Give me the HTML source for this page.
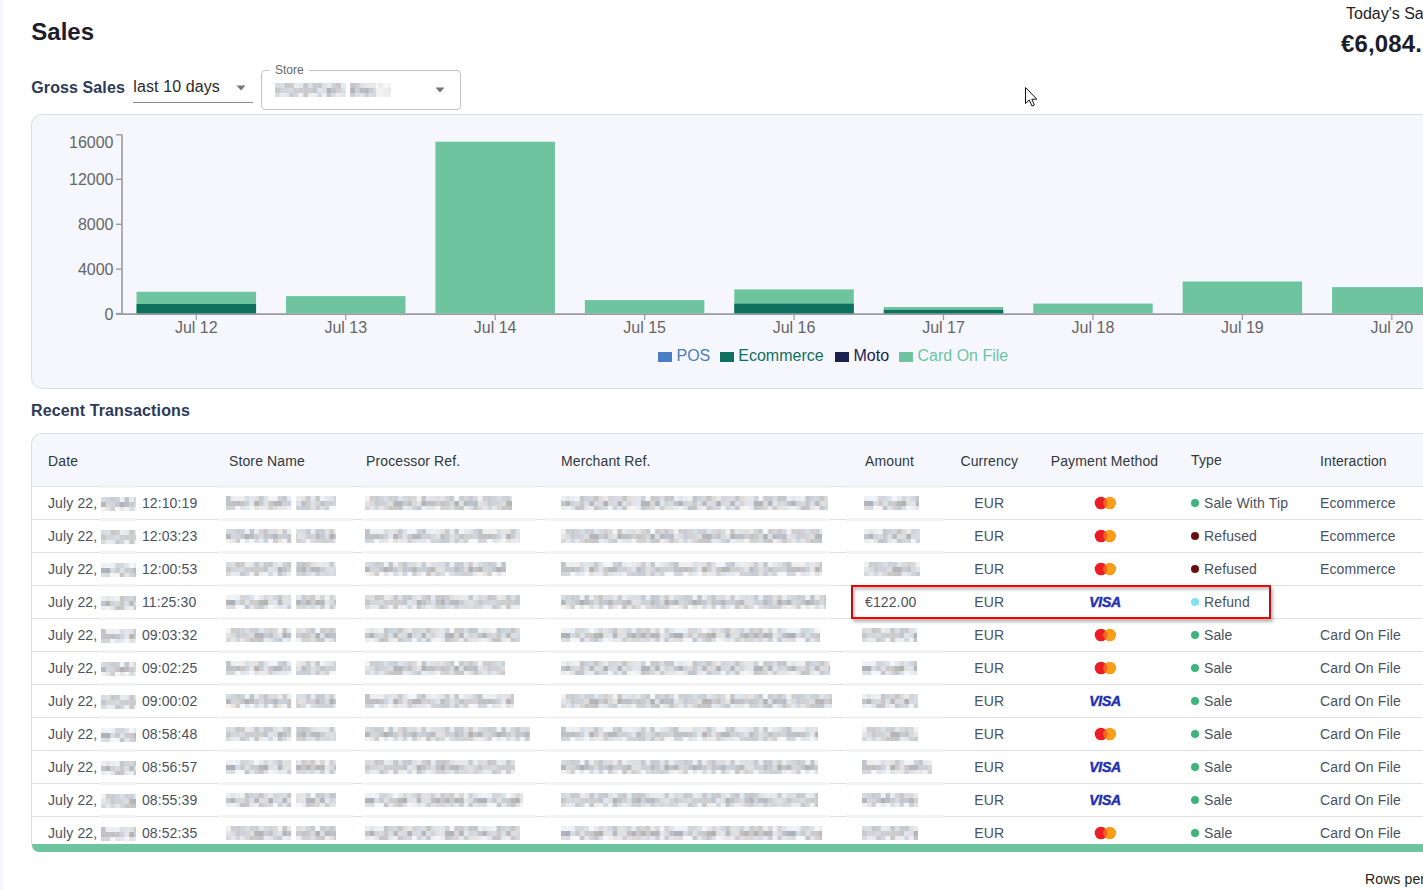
<!DOCTYPE html>
<html><head><meta charset="utf-8"><title>Sales</title>
<style>
html,body{margin:0;padding:0;}
body{width:1423px;height:890px;overflow:hidden;position:relative;background:#fff;font-family:"Liberation Sans",sans-serif;}
.t{position:absolute;white-space:nowrap;}
.s14{letter-spacing:0.12px;}
</style></head><body>
<div style="position:absolute;left:0px;top:0px;width:3px;height:890px;background:#f4f4fb;"></div>
<div class="t" style="left:31.30px;top:19.98px;font-size:24px;line-height:24px;color:#1b1d29;font-weight:700;">Sales</div>
<div class="t" style="left:1346.00px;top:5.95px;font-size:16px;line-height:16px;color:#222;font-weight:400;">Today's Sales</div>
<div class="t" style="left:1341.10px;top:31.98px;font-size:24px;line-height:24px;color:#1b1d29;font-weight:700;letter-spacing:0.12px;">&euro;6,084.</div>
<div class="t" style="left:31.30px;top:80.05px;font-size:16px;line-height:16px;color:#2c3a57;font-weight:700;letter-spacing:0.1px;">Gross Sales</div>
<div class="t" style="left:133.30px;top:79.15px;font-size:16px;line-height:16px;color:#2a2a2a;font-weight:400;letter-spacing:0.1px;">last 10 days</div>
<div style="position:absolute;left:133px;top:101.5px;width:120px;height:1px;background:#8a8a8a;"></div>
<svg style="position:absolute;left:235px;top:85px" width="12" height="6" viewBox="0 0 12 6"><path d="M1.5 0.5h9l-4.5 5z" fill="#757575"/></svg>
<div style="position:absolute;left:261px;top:70px;width:200px;height:39.5px;box-sizing:border-box;border:1px solid #c4c4c4;border-radius:4px;"></div>
<div style="position:absolute;left:269px;top:66px;width:40px;height:8px;background:#fff;"></div>
<div class="t" style="left:275.00px;top:64.24px;font-size:12px;line-height:12px;color:#666;font-weight:400;">Store</div>
<svg style="position:absolute;left:434px;top:87px" width="12" height="6" viewBox="0 0 12 6"><path d="M1.5 0.5h9l-4.5 5z" fill="#757575"/></svg>
<svg style="position:absolute;left:1024px;top:86px" width="16" height="22" viewBox="0 0 16 22"><path d="M1.5 1.5 L1.5 17.5 L5.3 14 L8 20 L10.4 19 L7.8 13.2 L12.8 13.2 Z" fill="#fff" stroke="#111" stroke-width="1" stroke-linejoin="round"/></svg>
<div style="position:absolute;left:31px;top:114px;width:1450px;height:275px;box-sizing:border-box;border:1px solid #dcdde0;border-radius:11px;background:#f5f7fc;"></div>
<svg style="position:absolute;left:0;top:0" width="1423" height="890"><line x1="122" y1="134.5" x2="122" y2="314" stroke="#9a9aa0" stroke-width="1.6"/><line x1="116" y1="314.1" x2="1423" y2="314.1" stroke="#9a9aa0" stroke-width="1.8"/><line x1="116" y1="134.8" x2="122" y2="134.8" stroke="#9a9aa0" stroke-width="1.4"/><line x1="116" y1="179.3" x2="122" y2="179.3" stroke="#9a9aa0" stroke-width="1.4"/><line x1="116" y1="224.3" x2="122" y2="224.3" stroke="#9a9aa0" stroke-width="1.4"/><line x1="116" y1="269.1" x2="122" y2="269.1" stroke="#9a9aa0" stroke-width="1.4"/><line x1="116" y1="313.6" x2="122" y2="313.6" stroke="#9a9aa0" stroke-width="1.4"/><rect x="136.55" y="291.8" width="119.5" height="21.60" fill="#6ec49f"/><rect x="136.55" y="304.0" width="119.5" height="9.40" fill="#10705f"/><line x1="196.30" y1="314" x2="196.30" y2="320" stroke="#9a9aa0" stroke-width="1.2"/><rect x="285.99" y="296.1" width="119.5" height="17.30" fill="#6ec49f"/><line x1="345.74" y1="314" x2="345.74" y2="320" stroke="#9a9aa0" stroke-width="1.2"/><rect x="435.43" y="141.7" width="119.5" height="171.70" fill="#6ec49f"/><line x1="495.18" y1="314" x2="495.18" y2="320" stroke="#9a9aa0" stroke-width="1.2"/><rect x="584.87" y="300.1" width="119.5" height="13.30" fill="#6ec49f"/><line x1="644.62" y1="314" x2="644.62" y2="320" stroke="#9a9aa0" stroke-width="1.2"/><rect x="734.31" y="289.4" width="119.5" height="24.00" fill="#6ec49f"/><rect x="734.31" y="303.7" width="119.5" height="9.70" fill="#10705f"/><line x1="794.06" y1="314" x2="794.06" y2="320" stroke="#9a9aa0" stroke-width="1.2"/><rect x="883.75" y="307.0" width="119.5" height="6.40" fill="#6ec49f"/><rect x="883.75" y="309.9" width="119.5" height="3.50" fill="#10705f"/><line x1="943.50" y1="314" x2="943.50" y2="320" stroke="#9a9aa0" stroke-width="1.2"/><rect x="1033.19" y="303.6" width="119.5" height="9.80" fill="#6ec49f"/><line x1="1092.94" y1="314" x2="1092.94" y2="320" stroke="#9a9aa0" stroke-width="1.2"/><rect x="1182.63" y="281.5" width="119.5" height="31.90" fill="#6ec49f"/><line x1="1242.38" y1="314" x2="1242.38" y2="320" stroke="#9a9aa0" stroke-width="1.2"/><rect x="1332.07" y="287.1" width="119.5" height="26.30" fill="#6ec49f"/><line x1="1391.82" y1="314" x2="1391.82" y2="320" stroke="#9a9aa0" stroke-width="1.2"/></svg>
<div class="t" style="left:-486.50px;width:600px;text-align:right;top:135.25px;font-size:16px;line-height:16px;color:#666;font-weight:400;">16000</div>
<div class="t" style="left:-486.50px;width:600px;text-align:right;top:172.35px;font-size:16px;line-height:16px;color:#666;font-weight:400;">12000</div>
<div class="t" style="left:-486.50px;width:600px;text-align:right;top:217.25px;font-size:16px;line-height:16px;color:#666;font-weight:400;">8000</div>
<div class="t" style="left:-486.50px;width:600px;text-align:right;top:262.25px;font-size:16px;line-height:16px;color:#666;font-weight:400;">4000</div>
<div class="t" style="left:-486.50px;width:600px;text-align:right;top:306.75px;font-size:16px;line-height:16px;color:#666;font-weight:400;">0</div>
<div class="t" style="left:-103.70px;width:600px;text-align:center;top:319.85px;font-size:16px;line-height:16px;color:#666;font-weight:400;">Jul 12</div>
<div class="t" style="left:45.74px;width:600px;text-align:center;top:319.85px;font-size:16px;line-height:16px;color:#666;font-weight:400;">Jul 13</div>
<div class="t" style="left:195.18px;width:600px;text-align:center;top:319.85px;font-size:16px;line-height:16px;color:#666;font-weight:400;">Jul 14</div>
<div class="t" style="left:344.62px;width:600px;text-align:center;top:319.85px;font-size:16px;line-height:16px;color:#666;font-weight:400;">Jul 15</div>
<div class="t" style="left:494.06px;width:600px;text-align:center;top:319.85px;font-size:16px;line-height:16px;color:#666;font-weight:400;">Jul 16</div>
<div class="t" style="left:643.50px;width:600px;text-align:center;top:319.85px;font-size:16px;line-height:16px;color:#666;font-weight:400;">Jul 17</div>
<div class="t" style="left:792.94px;width:600px;text-align:center;top:319.85px;font-size:16px;line-height:16px;color:#666;font-weight:400;">Jul 18</div>
<div class="t" style="left:942.38px;width:600px;text-align:center;top:319.85px;font-size:16px;line-height:16px;color:#666;font-weight:400;">Jul 19</div>
<div class="t" style="left:1091.82px;width:600px;text-align:center;top:319.85px;font-size:16px;line-height:16px;color:#666;font-weight:400;">Jul 20</div>
<div style="position:absolute;left:658px;top:351.5px;width:14px;height:10.5px;background:#4a7ec2;"></div>
<div class="t" style="left:676.50px;top:347.75px;font-size:16px;line-height:16px;color:#4a7ec2;font-weight:400;">POS</div>
<div style="position:absolute;left:719.8px;top:351.5px;width:14px;height:10.5px;background:#10705f;"></div>
<div class="t" style="left:738.30px;top:347.75px;font-size:16px;line-height:16px;color:#10705f;font-weight:400;">Ecommerce</div>
<div style="position:absolute;left:835px;top:351.5px;width:14px;height:10.5px;background:#1a2350;"></div>
<div class="t" style="left:853.50px;top:347.75px;font-size:16px;line-height:16px;color:#1a2350;font-weight:400;">Moto</div>
<div style="position:absolute;left:899px;top:351.5px;width:14px;height:10.5px;background:#6ec49f;"></div>
<div class="t" style="left:917.50px;top:347.75px;font-size:16px;line-height:16px;color:#6ec49f;font-weight:400;">Card On File</div>
<div class="t" style="left:31.00px;top:402.55px;font-size:16px;line-height:16px;color:#2c3a57;font-weight:700;letter-spacing:0.13px;">Recent Transactions</div>
<div style="position:absolute;left:31px;top:433px;width:1450px;height:412px;box-sizing:border-box;border:1px solid #dcdde0;border-bottom:none;border-radius:11px 11px 0 0;background:#fff;overflow:hidden;"></div>
<div style="position:absolute;left:32px;top:434px;width:1400px;height:52px;background:#f5f7fc;border-top-left-radius:10px;"></div>
<div style="position:absolute;left:32px;top:486px;width:1400px;height:1px;background:#e0e0e0;"></div>
<div style="position:absolute;left:32px;top:519px;width:1400px;height:1px;background:#e0e0e0;"></div>
<div style="position:absolute;left:32px;top:552px;width:1400px;height:1px;background:#e0e0e0;"></div>
<div style="position:absolute;left:32px;top:585px;width:1400px;height:1px;background:#e0e0e0;"></div>
<div style="position:absolute;left:32px;top:618px;width:1400px;height:1px;background:#e0e0e0;"></div>
<div style="position:absolute;left:32px;top:651px;width:1400px;height:1px;background:#e0e0e0;"></div>
<div style="position:absolute;left:32px;top:684px;width:1400px;height:1px;background:#e0e0e0;"></div>
<div style="position:absolute;left:32px;top:717px;width:1400px;height:1px;background:#e0e0e0;"></div>
<div style="position:absolute;left:32px;top:750px;width:1400px;height:1px;background:#e0e0e0;"></div>
<div style="position:absolute;left:32px;top:783px;width:1400px;height:1px;background:#e0e0e0;"></div>
<div style="position:absolute;left:32px;top:816px;width:1400px;height:1px;background:#e0e0e0;"></div>
<div style="position:absolute;left:100px;top:485px;width:36px;height:3px;background:#f3f3f4;"></div>
<div style="position:absolute;left:218px;top:485px;width:135px;height:3px;background:#f3f3f4;"></div>
<div style="position:absolute;left:362px;top:485px;width:174px;height:3px;background:#f3f3f4;"></div>
<div style="position:absolute;left:545px;top:485px;width:285px;height:3px;background:#f3f3f4;"></div>
<div style="position:absolute;left:846px;top:485px;width:98px;height:3px;background:#f3f3f4;"></div>
<div style="position:absolute;left:100px;top:518px;width:36px;height:3px;background:#f3f3f4;"></div>
<div style="position:absolute;left:218px;top:518px;width:135px;height:3px;background:#f3f3f4;"></div>
<div style="position:absolute;left:362px;top:518px;width:174px;height:3px;background:#f3f3f4;"></div>
<div style="position:absolute;left:545px;top:518px;width:285px;height:3px;background:#f3f3f4;"></div>
<div style="position:absolute;left:846px;top:518px;width:98px;height:3px;background:#f3f3f4;"></div>
<div style="position:absolute;left:100px;top:551px;width:36px;height:3px;background:#f3f3f4;"></div>
<div style="position:absolute;left:218px;top:551px;width:135px;height:3px;background:#f3f3f4;"></div>
<div style="position:absolute;left:362px;top:551px;width:174px;height:3px;background:#f3f3f4;"></div>
<div style="position:absolute;left:545px;top:551px;width:285px;height:3px;background:#f3f3f4;"></div>
<div style="position:absolute;left:846px;top:551px;width:98px;height:3px;background:#f3f3f4;"></div>
<div style="position:absolute;left:100px;top:584px;width:36px;height:3px;background:#f3f3f4;"></div>
<div style="position:absolute;left:218px;top:584px;width:135px;height:3px;background:#f3f3f4;"></div>
<div style="position:absolute;left:362px;top:584px;width:174px;height:3px;background:#f3f3f4;"></div>
<div style="position:absolute;left:545px;top:584px;width:285px;height:3px;background:#f3f3f4;"></div>
<div style="position:absolute;left:100px;top:617px;width:36px;height:3px;background:#f3f3f4;"></div>
<div style="position:absolute;left:218px;top:617px;width:135px;height:3px;background:#f3f3f4;"></div>
<div style="position:absolute;left:362px;top:617px;width:174px;height:3px;background:#f3f3f4;"></div>
<div style="position:absolute;left:545px;top:617px;width:285px;height:3px;background:#f3f3f4;"></div>
<div style="position:absolute;left:100px;top:650px;width:36px;height:3px;background:#f3f3f4;"></div>
<div style="position:absolute;left:218px;top:650px;width:135px;height:3px;background:#f3f3f4;"></div>
<div style="position:absolute;left:362px;top:650px;width:174px;height:3px;background:#f3f3f4;"></div>
<div style="position:absolute;left:545px;top:650px;width:285px;height:3px;background:#f3f3f4;"></div>
<div style="position:absolute;left:846px;top:650px;width:98px;height:3px;background:#f3f3f4;"></div>
<div style="position:absolute;left:100px;top:683px;width:36px;height:3px;background:#f3f3f4;"></div>
<div style="position:absolute;left:218px;top:683px;width:135px;height:3px;background:#f3f3f4;"></div>
<div style="position:absolute;left:362px;top:683px;width:174px;height:3px;background:#f3f3f4;"></div>
<div style="position:absolute;left:545px;top:683px;width:285px;height:3px;background:#f3f3f4;"></div>
<div style="position:absolute;left:846px;top:683px;width:98px;height:3px;background:#f3f3f4;"></div>
<div style="position:absolute;left:100px;top:716px;width:36px;height:3px;background:#f3f3f4;"></div>
<div style="position:absolute;left:218px;top:716px;width:135px;height:3px;background:#f3f3f4;"></div>
<div style="position:absolute;left:362px;top:716px;width:174px;height:3px;background:#f3f3f4;"></div>
<div style="position:absolute;left:545px;top:716px;width:285px;height:3px;background:#f3f3f4;"></div>
<div style="position:absolute;left:846px;top:716px;width:98px;height:3px;background:#f3f3f4;"></div>
<div style="position:absolute;left:100px;top:749px;width:36px;height:3px;background:#f3f3f4;"></div>
<div style="position:absolute;left:218px;top:749px;width:135px;height:3px;background:#f3f3f4;"></div>
<div style="position:absolute;left:362px;top:749px;width:174px;height:3px;background:#f3f3f4;"></div>
<div style="position:absolute;left:545px;top:749px;width:285px;height:3px;background:#f3f3f4;"></div>
<div style="position:absolute;left:846px;top:749px;width:98px;height:3px;background:#f3f3f4;"></div>
<div style="position:absolute;left:100px;top:782px;width:36px;height:3px;background:#f3f3f4;"></div>
<div style="position:absolute;left:218px;top:782px;width:135px;height:3px;background:#f3f3f4;"></div>
<div style="position:absolute;left:362px;top:782px;width:174px;height:3px;background:#f3f3f4;"></div>
<div style="position:absolute;left:545px;top:782px;width:285px;height:3px;background:#f3f3f4;"></div>
<div style="position:absolute;left:846px;top:782px;width:98px;height:3px;background:#f3f3f4;"></div>
<div style="position:absolute;left:100px;top:815px;width:36px;height:3px;background:#f3f3f4;"></div>
<div style="position:absolute;left:218px;top:815px;width:135px;height:3px;background:#f3f3f4;"></div>
<div style="position:absolute;left:362px;top:815px;width:174px;height:3px;background:#f3f3f4;"></div>
<div style="position:absolute;left:545px;top:815px;width:285px;height:3px;background:#f3f3f4;"></div>
<div style="position:absolute;left:846px;top:815px;width:98px;height:3px;background:#f3f3f4;"></div>
<div class="t s14" style="left:48.00px;top:453.95px;font-size:14px;line-height:14px;color:#32373f;font-weight:400;">Date</div>
<div class="t s14" style="left:229.00px;top:453.95px;font-size:14px;line-height:14px;color:#32373f;font-weight:400;">Store Name</div>
<div class="t s14" style="left:366.00px;top:453.95px;font-size:14px;line-height:14px;color:#32373f;font-weight:400;">Processor Ref.</div>
<div class="t s14" style="left:561.00px;top:453.95px;font-size:14px;line-height:14px;color:#32373f;font-weight:400;">Merchant Ref.</div>
<div class="t s14" style="left:865.00px;top:453.95px;font-size:14px;line-height:14px;color:#32373f;font-weight:400;">Amount</div>
<div class="t s14" style="left:689.30px;width:600px;text-align:center;top:453.95px;font-size:14px;line-height:14px;color:#32373f;font-weight:400;">Currency</div>
<div class="t s14" style="left:804.50px;width:600px;text-align:center;top:453.95px;font-size:14px;line-height:14px;color:#32373f;font-weight:400;">Payment Method</div>
<div class="t s14" style="left:1191.00px;top:453.45px;font-size:14px;line-height:14px;color:#32373f;font-weight:400;">Type</div>
<div class="t s14" style="left:1320.00px;top:453.95px;font-size:14px;line-height:14px;color:#32373f;font-weight:400;">Interaction</div>
<div class="t s14" style="left:48.00px;top:495.85px;font-size:14px;line-height:14px;color:#4b525e;font-weight:400;">July 22,</div>
<div class="t s14" style="left:141.90px;top:495.85px;font-size:14px;line-height:14px;color:#4b525e;font-weight:400;">12:10:19</div>
<div class="t s14" style="left:689.30px;width:600px;text-align:center;top:495.85px;font-size:14px;line-height:14px;color:#4b525e;font-weight:400;">EUR</div>
<svg style="position:absolute;left:1093px;top:496px" width="24" height="14" viewBox="0 0 24 14"><circle cx="8" cy="7" r="6.3" fill="#eb1c24"/><circle cx="16.8" cy="7" r="6.3" fill="#f89e1b"/><path d="M12.4 2.4 A6.3 6.3 0 0 1 12.4 11.6 A6.3 6.3 0 0 1 12.4 2.4Z" fill="#f4641f"/></svg>
<div style="position:absolute;left:1191px;top:499px;width:8px;height:8px;background:#3cb57a;border-radius:50%;"></div>
<div class="t s14" style="left:1204.00px;top:495.85px;font-size:14px;line-height:14px;color:#4b525e;font-weight:400;">Sale With Tip</div>
<div class="t s14" style="left:1320.00px;top:495.85px;font-size:14px;line-height:14px;color:#4b525e;font-weight:400;">Ecommerce</div>
<div class="t s14" style="left:48.00px;top:528.85px;font-size:14px;line-height:14px;color:#4b525e;font-weight:400;">July 22,</div>
<div class="t s14" style="left:141.90px;top:528.85px;font-size:14px;line-height:14px;color:#4b525e;font-weight:400;">12:03:23</div>
<div class="t s14" style="left:689.30px;width:600px;text-align:center;top:528.85px;font-size:14px;line-height:14px;color:#4b525e;font-weight:400;">EUR</div>
<svg style="position:absolute;left:1093px;top:529px" width="24" height="14" viewBox="0 0 24 14"><circle cx="8" cy="7" r="6.3" fill="#eb1c24"/><circle cx="16.8" cy="7" r="6.3" fill="#f89e1b"/><path d="M12.4 2.4 A6.3 6.3 0 0 1 12.4 11.6 A6.3 6.3 0 0 1 12.4 2.4Z" fill="#f4641f"/></svg>
<div style="position:absolute;left:1191px;top:532px;width:8px;height:8px;background:#6b0d0d;border-radius:50%;"></div>
<div class="t s14" style="left:1204.00px;top:528.85px;font-size:14px;line-height:14px;color:#4b525e;font-weight:400;">Refused</div>
<div class="t s14" style="left:1320.00px;top:528.85px;font-size:14px;line-height:14px;color:#4b525e;font-weight:400;">Ecommerce</div>
<div class="t s14" style="left:48.00px;top:561.85px;font-size:14px;line-height:14px;color:#4b525e;font-weight:400;">July 22,</div>
<div class="t s14" style="left:141.90px;top:561.85px;font-size:14px;line-height:14px;color:#4b525e;font-weight:400;">12:00:53</div>
<div class="t s14" style="left:689.30px;width:600px;text-align:center;top:561.85px;font-size:14px;line-height:14px;color:#4b525e;font-weight:400;">EUR</div>
<svg style="position:absolute;left:1093px;top:562px" width="24" height="14" viewBox="0 0 24 14"><circle cx="8" cy="7" r="6.3" fill="#eb1c24"/><circle cx="16.8" cy="7" r="6.3" fill="#f89e1b"/><path d="M12.4 2.4 A6.3 6.3 0 0 1 12.4 11.6 A6.3 6.3 0 0 1 12.4 2.4Z" fill="#f4641f"/></svg>
<div style="position:absolute;left:1191px;top:565px;width:8px;height:8px;background:#6b0d0d;border-radius:50%;"></div>
<div class="t s14" style="left:1204.00px;top:561.85px;font-size:14px;line-height:14px;color:#4b525e;font-weight:400;">Refused</div>
<div class="t s14" style="left:1320.00px;top:561.85px;font-size:14px;line-height:14px;color:#4b525e;font-weight:400;">Ecommerce</div>
<div class="t s14" style="left:48.00px;top:594.85px;font-size:14px;line-height:14px;color:#4b525e;font-weight:400;">July 22,</div>
<div class="t s14" style="left:141.90px;top:594.85px;font-size:14px;line-height:14px;color:#4b525e;font-weight:400;">11:25:30</div>
<div class="t s14" style="left:865.00px;top:594.85px;font-size:14px;line-height:14px;color:#4b525e;font-weight:400;">&euro;122.00</div>
<div class="t s14" style="left:689.30px;width:600px;text-align:center;top:594.85px;font-size:14px;line-height:14px;color:#4b525e;font-weight:400;">EUR</div>
<div class="t s14" style="left:805.00px;width:600px;text-align:center;top:595.35px;font-size:14px;line-height:14px;color:#1f30b4;font-weight:700;font-style:italic;letter-spacing:-0.3px;-webkit-text-stroke:0.45px #1f30b4;">VISA</div>
<div style="position:absolute;left:1191px;top:598px;width:8px;height:8px;background:#7fe3ee;border-radius:50%;"></div>
<div class="t s14" style="left:1204.00px;top:594.85px;font-size:14px;line-height:14px;color:#4b525e;font-weight:400;">Refund</div>
<div class="t s14" style="left:48.00px;top:627.85px;font-size:14px;line-height:14px;color:#4b525e;font-weight:400;">July 22,</div>
<div class="t s14" style="left:141.90px;top:627.85px;font-size:14px;line-height:14px;color:#4b525e;font-weight:400;">09:03:32</div>
<div class="t s14" style="left:689.30px;width:600px;text-align:center;top:627.85px;font-size:14px;line-height:14px;color:#4b525e;font-weight:400;">EUR</div>
<svg style="position:absolute;left:1093px;top:628px" width="24" height="14" viewBox="0 0 24 14"><circle cx="8" cy="7" r="6.3" fill="#eb1c24"/><circle cx="16.8" cy="7" r="6.3" fill="#f89e1b"/><path d="M12.4 2.4 A6.3 6.3 0 0 1 12.4 11.6 A6.3 6.3 0 0 1 12.4 2.4Z" fill="#f4641f"/></svg>
<div style="position:absolute;left:1191px;top:631px;width:8px;height:8px;background:#3cb57a;border-radius:50%;"></div>
<div class="t s14" style="left:1204.00px;top:627.85px;font-size:14px;line-height:14px;color:#4b525e;font-weight:400;">Sale</div>
<div class="t s14" style="left:1320.00px;top:627.85px;font-size:14px;line-height:14px;color:#4b525e;font-weight:400;">Card On File</div>
<div class="t s14" style="left:48.00px;top:660.85px;font-size:14px;line-height:14px;color:#4b525e;font-weight:400;">July 22,</div>
<div class="t s14" style="left:141.90px;top:660.85px;font-size:14px;line-height:14px;color:#4b525e;font-weight:400;">09:02:25</div>
<div class="t s14" style="left:689.30px;width:600px;text-align:center;top:660.85px;font-size:14px;line-height:14px;color:#4b525e;font-weight:400;">EUR</div>
<svg style="position:absolute;left:1093px;top:661px" width="24" height="14" viewBox="0 0 24 14"><circle cx="8" cy="7" r="6.3" fill="#eb1c24"/><circle cx="16.8" cy="7" r="6.3" fill="#f89e1b"/><path d="M12.4 2.4 A6.3 6.3 0 0 1 12.4 11.6 A6.3 6.3 0 0 1 12.4 2.4Z" fill="#f4641f"/></svg>
<div style="position:absolute;left:1191px;top:664px;width:8px;height:8px;background:#3cb57a;border-radius:50%;"></div>
<div class="t s14" style="left:1204.00px;top:660.85px;font-size:14px;line-height:14px;color:#4b525e;font-weight:400;">Sale</div>
<div class="t s14" style="left:1320.00px;top:660.85px;font-size:14px;line-height:14px;color:#4b525e;font-weight:400;">Card On File</div>
<div class="t s14" style="left:48.00px;top:693.85px;font-size:14px;line-height:14px;color:#4b525e;font-weight:400;">July 22,</div>
<div class="t s14" style="left:141.90px;top:693.85px;font-size:14px;line-height:14px;color:#4b525e;font-weight:400;">09:00:02</div>
<div class="t s14" style="left:689.30px;width:600px;text-align:center;top:693.85px;font-size:14px;line-height:14px;color:#4b525e;font-weight:400;">EUR</div>
<div class="t s14" style="left:805.00px;width:600px;text-align:center;top:694.35px;font-size:14px;line-height:14px;color:#1f30b4;font-weight:700;font-style:italic;letter-spacing:-0.3px;-webkit-text-stroke:0.45px #1f30b4;">VISA</div>
<div style="position:absolute;left:1191px;top:697px;width:8px;height:8px;background:#3cb57a;border-radius:50%;"></div>
<div class="t s14" style="left:1204.00px;top:693.85px;font-size:14px;line-height:14px;color:#4b525e;font-weight:400;">Sale</div>
<div class="t s14" style="left:1320.00px;top:693.85px;font-size:14px;line-height:14px;color:#4b525e;font-weight:400;">Card On File</div>
<div class="t s14" style="left:48.00px;top:726.85px;font-size:14px;line-height:14px;color:#4b525e;font-weight:400;">July 22,</div>
<div class="t s14" style="left:141.90px;top:726.85px;font-size:14px;line-height:14px;color:#4b525e;font-weight:400;">08:58:48</div>
<div class="t s14" style="left:689.30px;width:600px;text-align:center;top:726.85px;font-size:14px;line-height:14px;color:#4b525e;font-weight:400;">EUR</div>
<svg style="position:absolute;left:1093px;top:727px" width="24" height="14" viewBox="0 0 24 14"><circle cx="8" cy="7" r="6.3" fill="#eb1c24"/><circle cx="16.8" cy="7" r="6.3" fill="#f89e1b"/><path d="M12.4 2.4 A6.3 6.3 0 0 1 12.4 11.6 A6.3 6.3 0 0 1 12.4 2.4Z" fill="#f4641f"/></svg>
<div style="position:absolute;left:1191px;top:730px;width:8px;height:8px;background:#3cb57a;border-radius:50%;"></div>
<div class="t s14" style="left:1204.00px;top:726.85px;font-size:14px;line-height:14px;color:#4b525e;font-weight:400;">Sale</div>
<div class="t s14" style="left:1320.00px;top:726.85px;font-size:14px;line-height:14px;color:#4b525e;font-weight:400;">Card On File</div>
<div class="t s14" style="left:48.00px;top:759.85px;font-size:14px;line-height:14px;color:#4b525e;font-weight:400;">July 22,</div>
<div class="t s14" style="left:141.90px;top:759.85px;font-size:14px;line-height:14px;color:#4b525e;font-weight:400;">08:56:57</div>
<div class="t s14" style="left:689.30px;width:600px;text-align:center;top:759.85px;font-size:14px;line-height:14px;color:#4b525e;font-weight:400;">EUR</div>
<div class="t s14" style="left:805.00px;width:600px;text-align:center;top:760.35px;font-size:14px;line-height:14px;color:#1f30b4;font-weight:700;font-style:italic;letter-spacing:-0.3px;-webkit-text-stroke:0.45px #1f30b4;">VISA</div>
<div style="position:absolute;left:1191px;top:763px;width:8px;height:8px;background:#3cb57a;border-radius:50%;"></div>
<div class="t s14" style="left:1204.00px;top:759.85px;font-size:14px;line-height:14px;color:#4b525e;font-weight:400;">Sale</div>
<div class="t s14" style="left:1320.00px;top:759.85px;font-size:14px;line-height:14px;color:#4b525e;font-weight:400;">Card On File</div>
<div class="t s14" style="left:48.00px;top:792.85px;font-size:14px;line-height:14px;color:#4b525e;font-weight:400;">July 22,</div>
<div class="t s14" style="left:141.90px;top:792.85px;font-size:14px;line-height:14px;color:#4b525e;font-weight:400;">08:55:39</div>
<div class="t s14" style="left:689.30px;width:600px;text-align:center;top:792.85px;font-size:14px;line-height:14px;color:#4b525e;font-weight:400;">EUR</div>
<div class="t s14" style="left:805.00px;width:600px;text-align:center;top:793.35px;font-size:14px;line-height:14px;color:#1f30b4;font-weight:700;font-style:italic;letter-spacing:-0.3px;-webkit-text-stroke:0.45px #1f30b4;">VISA</div>
<div style="position:absolute;left:1191px;top:796px;width:8px;height:8px;background:#3cb57a;border-radius:50%;"></div>
<div class="t s14" style="left:1204.00px;top:792.85px;font-size:14px;line-height:14px;color:#4b525e;font-weight:400;">Sale</div>
<div class="t s14" style="left:1320.00px;top:792.85px;font-size:14px;line-height:14px;color:#4b525e;font-weight:400;">Card On File</div>
<div class="t s14" style="left:48.00px;top:825.85px;font-size:14px;line-height:14px;color:#4b525e;font-weight:400;">July 22,</div>
<div class="t s14" style="left:141.90px;top:825.85px;font-size:14px;line-height:14px;color:#4b525e;font-weight:400;">08:52:35</div>
<div class="t s14" style="left:689.30px;width:600px;text-align:center;top:825.85px;font-size:14px;line-height:14px;color:#4b525e;font-weight:400;">EUR</div>
<svg style="position:absolute;left:1093px;top:826px" width="24" height="14" viewBox="0 0 24 14"><circle cx="8" cy="7" r="6.3" fill="#eb1c24"/><circle cx="16.8" cy="7" r="6.3" fill="#f89e1b"/><path d="M12.4 2.4 A6.3 6.3 0 0 1 12.4 11.6 A6.3 6.3 0 0 1 12.4 2.4Z" fill="#f4641f"/></svg>
<div style="position:absolute;left:1191px;top:829px;width:8px;height:8px;background:#3cb57a;border-radius:50%;"></div>
<div class="t s14" style="left:1204.00px;top:825.85px;font-size:14px;line-height:14px;color:#4b525e;font-weight:400;">Sale</div>
<div class="t s14" style="left:1320.00px;top:825.85px;font-size:14px;line-height:14px;color:#4b525e;font-weight:400;">Card On File</div>
<svg style="position:absolute;left:0;top:0" width="1423" height="890"><defs><pattern id="p0" patternUnits="userSpaceOnUse" width="112.8" height="15"><rect x="0.0" y="0" width="5" height="5" fill="#d7dbe1"/><rect x="4.7" y="0" width="5" height="5" fill="#dcdee2"/><rect x="9.4" y="0" width="5" height="5" fill="#c7c7cb"/><rect x="14.1" y="0" width="5" height="5" fill="#cdcbc9"/><rect x="18.8" y="0" width="5" height="5" fill="#e8eaee"/><rect x="23.5" y="0" width="5" height="5" fill="#e3e7ed"/><rect x="28.2" y="0" width="5" height="5" fill="#c5c7cb"/><rect x="32.9" y="0" width="5" height="5" fill="#dae0e8"/><rect x="37.6" y="0" width="5" height="5" fill="#c7cbd1"/><rect x="42.3" y="0" width="5" height="5" fill="#c8c8cc"/><rect x="47.0" y="0" width="5" height="5" fill="#dee0e4"/><rect x="51.7" y="0" width="5" height="5" fill="#e7e9ed"/><rect x="56.4" y="0" width="5" height="5" fill="#d1d1d5"/><rect x="61.1" y="0" width="5" height="5" fill="#c6c6ca"/><rect x="65.8" y="0" width="5" height="5" fill="#e4eaf2"/><rect x="70.5" y="0" width="5" height="5" fill="#c6cad0"/><rect x="75.2" y="0" width="5" height="5" fill="#c5c5c9"/><rect x="79.9" y="0" width="5" height="5" fill="#cfcdcb"/><rect x="84.6" y="0" width="5" height="5" fill="#dde1e7"/><rect x="89.3" y="0" width="5" height="5" fill="#e5e7eb"/><rect x="94.0" y="0" width="5" height="5" fill="#ebe9e7"/><rect x="98.7" y="0" width="5" height="5" fill="#e6eaf0"/><rect x="103.4" y="0" width="5" height="5" fill="#c9c9cd"/><rect x="108.1" y="0" width="5" height="5" fill="#e7ebf1"/><rect x="0.0" y="5" width="5" height="5" fill="#c6c8cc"/><rect x="4.7" y="5" width="5" height="5" fill="#d2d4d8"/><rect x="9.4" y="5" width="5" height="5" fill="#d3d5d9"/><rect x="14.1" y="5" width="5" height="5" fill="#d6dae0"/><rect x="18.8" y="5" width="5" height="5" fill="#ceced2"/><rect x="23.5" y="5" width="5" height="5" fill="#ceccca"/><rect x="28.2" y="5" width="5" height="5" fill="#ccccd0"/><rect x="32.9" y="5" width="5" height="5" fill="#d0cecc"/><rect x="37.6" y="5" width="5" height="5" fill="#c2c6cc"/><rect x="42.3" y="5" width="5" height="5" fill="#e1e5eb"/><rect x="47.0" y="5" width="5" height="5" fill="#dbdfe5"/><rect x="51.7" y="5" width="5" height="5" fill="#b4b4b8"/><rect x="56.4" y="5" width="5" height="5" fill="#c2c2c6"/><rect x="61.1" y="5" width="5" height="5" fill="#d2d0ce"/><rect x="65.8" y="5" width="5" height="5" fill="#d9dfe7"/><rect x="70.5" y="5" width="5" height="5" fill="#c1c1c5"/><rect x="75.2" y="5" width="5" height="5" fill="#b3b5b9"/><rect x="79.9" y="5" width="5" height="5" fill="#cbd1d9"/><rect x="84.6" y="5" width="5" height="5" fill="#bdbbb9"/><rect x="89.3" y="5" width="5" height="5" fill="#b4bac2"/><rect x="94.0" y="5" width="5" height="5" fill="#c9cbcf"/><rect x="98.7" y="5" width="5" height="5" fill="#d9dbdf"/><rect x="103.4" y="5" width="5" height="5" fill="#dfdfe3"/><rect x="108.1" y="5" width="5" height="5" fill="#d7d5d3"/><rect x="0.0" y="10" width="5" height="5" fill="#dcdad8"/><rect x="4.7" y="10" width="5" height="5" fill="#e5ebf3"/><rect x="9.4" y="10" width="5" height="5" fill="#e4eaf2"/><rect x="14.1" y="10" width="5" height="5" fill="#c7c9cd"/><rect x="18.8" y="10" width="5" height="5" fill="#d0d6de"/><rect x="23.5" y="10" width="5" height="5" fill="#eff1f5"/><rect x="28.2" y="10" width="5" height="5" fill="#cac8c6"/><rect x="32.9" y="10" width="5" height="5" fill="#ececf0"/><rect x="37.6" y="10" width="5" height="5" fill="#eaf0f8"/><rect x="42.3" y="10" width="5" height="5" fill="#d1d7df"/><rect x="47.0" y="10" width="5" height="5" fill="#f1efed"/><rect x="51.7" y="10" width="5" height="5" fill="#c0c6ce"/><rect x="56.4" y="10" width="5" height="5" fill="#d9dde3"/><rect x="61.1" y="10" width="5" height="5" fill="#eaecf0"/><rect x="65.8" y="10" width="5" height="5" fill="#e2e4e8"/><rect x="70.5" y="10" width="5" height="5" fill="#d4d2d0"/><rect x="75.2" y="10" width="5" height="5" fill="#cbcfd5"/><rect x="79.9" y="10" width="5" height="5" fill="#d8dee6"/><rect x="84.6" y="10" width="5" height="5" fill="#e2e4e8"/><rect x="89.3" y="10" width="5" height="5" fill="#c9cfd7"/><rect x="94.0" y="10" width="5" height="5" fill="#dcdce0"/><rect x="98.7" y="10" width="5" height="5" fill="#d4d8de"/><rect x="103.4" y="10" width="5" height="5" fill="#dedee2"/><rect x="108.1" y="10" width="5" height="5" fill="#d0d6de"/></pattern><pattern id="p1" patternUnits="userSpaceOnUse" width="112.8" height="15"><rect x="0.0" y="0" width="5" height="5" fill="#d5dbe3"/><rect x="4.7" y="0" width="5" height="5" fill="#d1d5db"/><rect x="9.4" y="0" width="5" height="5" fill="#c8ccd2"/><rect x="14.1" y="0" width="5" height="5" fill="#ccd0d6"/><rect x="18.8" y="0" width="5" height="5" fill="#edf1f7"/><rect x="23.5" y="0" width="5" height="5" fill="#bfc5cd"/><rect x="28.2" y="0" width="5" height="5" fill="#e8ecf2"/><rect x="32.9" y="0" width="5" height="5" fill="#d7d5d3"/><rect x="37.6" y="0" width="5" height="5" fill="#c3c7cd"/><rect x="42.3" y="0" width="5" height="5" fill="#dddde1"/><rect x="47.0" y="0" width="5" height="5" fill="#dadade"/><rect x="51.7" y="0" width="5" height="5" fill="#ebe9e7"/><rect x="56.4" y="0" width="5" height="5" fill="#cbcbcf"/><rect x="61.1" y="0" width="5" height="5" fill="#eaecf0"/><rect x="65.8" y="0" width="5" height="5" fill="#e0e0e4"/><rect x="70.5" y="0" width="5" height="5" fill="#d8dee6"/><rect x="75.2" y="0" width="5" height="5" fill="#d8dee6"/><rect x="79.9" y="0" width="5" height="5" fill="#c5cbd3"/><rect x="84.6" y="0" width="5" height="5" fill="#e7edf5"/><rect x="89.3" y="0" width="5" height="5" fill="#c6cad0"/><rect x="94.0" y="0" width="5" height="5" fill="#c7cbd1"/><rect x="98.7" y="0" width="5" height="5" fill="#dfe3e9"/><rect x="103.4" y="0" width="5" height="5" fill="#ceccca"/><rect x="108.1" y="0" width="5" height="5" fill="#e9ebef"/><rect x="0.0" y="5" width="5" height="5" fill="#b5b7bb"/><rect x="4.7" y="5" width="5" height="5" fill="#d3d7dd"/><rect x="9.4" y="5" width="5" height="5" fill="#d1d3d7"/><rect x="14.1" y="5" width="5" height="5" fill="#c6c6ca"/><rect x="18.8" y="5" width="5" height="5" fill="#b0b2b6"/><rect x="23.5" y="5" width="5" height="5" fill="#bcbcc0"/><rect x="28.2" y="5" width="5" height="5" fill="#c7cbd1"/><rect x="32.9" y="5" width="5" height="5" fill="#dbd9d7"/><rect x="37.6" y="5" width="5" height="5" fill="#c5c5c9"/><rect x="42.3" y="5" width="5" height="5" fill="#c2c8d0"/><rect x="47.0" y="5" width="5" height="5" fill="#b6b8bc"/><rect x="51.7" y="5" width="5" height="5" fill="#cad0d8"/><rect x="56.4" y="5" width="5" height="5" fill="#c9cfd7"/><rect x="61.1" y="5" width="5" height="5" fill="#c2c4c8"/><rect x="65.8" y="5" width="5" height="5" fill="#b8babe"/><rect x="70.5" y="5" width="5" height="5" fill="#e2e0de"/><rect x="75.2" y="5" width="5" height="5" fill="#e2e0de"/><rect x="79.9" y="5" width="5" height="5" fill="#cdd1d7"/><rect x="84.6" y="5" width="5" height="5" fill="#d0d2d6"/><rect x="89.3" y="5" width="5" height="5" fill="#bcbcc0"/><rect x="94.0" y="5" width="5" height="5" fill="#c6cad0"/><rect x="98.7" y="5" width="5" height="5" fill="#dbdbdf"/><rect x="103.4" y="5" width="5" height="5" fill="#b0b0b4"/><rect x="108.1" y="5" width="5" height="5" fill="#c2c4c8"/><rect x="0.0" y="10" width="5" height="5" fill="#f3f1ef"/><rect x="4.7" y="10" width="5" height="5" fill="#e8e6e4"/><rect x="9.4" y="10" width="5" height="5" fill="#d1cfcd"/><rect x="14.1" y="10" width="5" height="5" fill="#f4f8fe"/><rect x="18.8" y="10" width="5" height="5" fill="#e5e5e9"/><rect x="23.5" y="10" width="5" height="5" fill="#f4f4f8"/><rect x="28.2" y="10" width="5" height="5" fill="#d8dce2"/><rect x="32.9" y="10" width="5" height="5" fill="#eaeef4"/><rect x="37.6" y="10" width="5" height="5" fill="#ced4dc"/><rect x="42.3" y="10" width="5" height="5" fill="#f2f6fc"/><rect x="47.0" y="10" width="5" height="5" fill="#cfcfd3"/><rect x="51.7" y="10" width="5" height="5" fill="#e6e4e2"/><rect x="56.4" y="10" width="5" height="5" fill="#f1f3f7"/><rect x="61.1" y="10" width="5" height="5" fill="#c8c6c4"/><rect x="65.8" y="10" width="5" height="5" fill="#e5e3e1"/><rect x="70.5" y="10" width="5" height="5" fill="#cfcfd3"/><rect x="75.2" y="10" width="5" height="5" fill="#d5dbe3"/><rect x="79.9" y="10" width="5" height="5" fill="#f5f3f1"/><rect x="84.6" y="10" width="5" height="5" fill="#dadce0"/><rect x="89.3" y="10" width="5" height="5" fill="#d1d3d7"/><rect x="94.0" y="10" width="5" height="5" fill="#cdd3db"/><rect x="98.7" y="10" width="5" height="5" fill="#d3d1cf"/><rect x="103.4" y="10" width="5" height="5" fill="#ccd2da"/><rect x="108.1" y="10" width="5" height="5" fill="#eaeaee"/></pattern><pattern id="p2" patternUnits="userSpaceOnUse" width="112.8" height="15"><rect x="0.0" y="0" width="5" height="5" fill="#bfc5cd"/><rect x="4.7" y="0" width="5" height="5" fill="#f0eeec"/><rect x="9.4" y="0" width="5" height="5" fill="#eceef2"/><rect x="14.1" y="0" width="5" height="5" fill="#edeff3"/><rect x="18.8" y="0" width="5" height="5" fill="#dbdfe5"/><rect x="23.5" y="0" width="5" height="5" fill="#e1e5eb"/><rect x="28.2" y="0" width="5" height="5" fill="#e2e0de"/><rect x="32.9" y="0" width="5" height="5" fill="#c4cad2"/><rect x="37.6" y="0" width="5" height="5" fill="#dce2ea"/><rect x="42.3" y="0" width="5" height="5" fill="#f2f4f8"/><rect x="47.0" y="0" width="5" height="5" fill="#f1f5fb"/><rect x="51.7" y="0" width="5" height="5" fill="#cdd1d7"/><rect x="56.4" y="0" width="5" height="5" fill="#c4c8ce"/><rect x="61.1" y="0" width="5" height="5" fill="#e4eaf2"/><rect x="65.8" y="0" width="5" height="5" fill="#ecf0f6"/><rect x="70.5" y="0" width="5" height="5" fill="#eaeaee"/><rect x="75.2" y="0" width="5" height="5" fill="#e5e3e1"/><rect x="79.9" y="0" width="5" height="5" fill="#ccccd0"/><rect x="84.6" y="0" width="5" height="5" fill="#e6eaf0"/><rect x="89.3" y="0" width="5" height="5" fill="#c4c6ca"/><rect x="94.0" y="0" width="5" height="5" fill="#f1f3f7"/><rect x="98.7" y="0" width="5" height="5" fill="#e4e8ee"/><rect x="103.4" y="0" width="5" height="5" fill="#dee2e8"/><rect x="108.1" y="0" width="5" height="5" fill="#d0d2d6"/><rect x="0.0" y="5" width="5" height="5" fill="#bfc3c9"/><rect x="4.7" y="5" width="5" height="5" fill="#c1c1c5"/><rect x="9.4" y="5" width="5" height="5" fill="#bebec2"/><rect x="14.1" y="5" width="5" height="5" fill="#c7c5c3"/><rect x="18.8" y="5" width="5" height="5" fill="#cdd3db"/><rect x="23.5" y="5" width="5" height="5" fill="#e4e8ee"/><rect x="28.2" y="5" width="5" height="5" fill="#b6b4b2"/><rect x="32.9" y="5" width="5" height="5" fill="#ccccd0"/><rect x="37.6" y="5" width="5" height="5" fill="#e3e3e7"/><rect x="42.3" y="5" width="5" height="5" fill="#c9c9cd"/><rect x="47.0" y="5" width="5" height="5" fill="#b7b7bb"/><rect x="51.7" y="5" width="5" height="5" fill="#b8b8bc"/><rect x="56.4" y="5" width="5" height="5" fill="#cfd1d5"/><rect x="61.1" y="5" width="5" height="5" fill="#cbcfd5"/><rect x="65.8" y="5" width="5" height="5" fill="#d5d7db"/><rect x="70.5" y="5" width="5" height="5" fill="#e0e4ea"/><rect x="75.2" y="5" width="5" height="5" fill="#babec4"/><rect x="79.9" y="5" width="5" height="5" fill="#cdcdd1"/><rect x="84.6" y="5" width="5" height="5" fill="#dddfe3"/><rect x="89.3" y="5" width="5" height="5" fill="#d2d4d8"/><rect x="94.0" y="5" width="5" height="5" fill="#c3c3c7"/><rect x="98.7" y="5" width="5" height="5" fill="#d0d0d4"/><rect x="103.4" y="5" width="5" height="5" fill="#cdcfd3"/><rect x="108.1" y="5" width="5" height="5" fill="#d2d4d8"/><rect x="0.0" y="10" width="5" height="5" fill="#d2d6dc"/><rect x="4.7" y="10" width="5" height="5" fill="#d4d6da"/><rect x="9.4" y="10" width="5" height="5" fill="#f4f6fa"/><rect x="14.1" y="10" width="5" height="5" fill="#dfe5ed"/><rect x="18.8" y="10" width="5" height="5" fill="#e6e8ec"/><rect x="23.5" y="10" width="5" height="5" fill="#f3f5f9"/><rect x="28.2" y="10" width="5" height="5" fill="#e3e1df"/><rect x="32.9" y="10" width="5" height="5" fill="#eaeaee"/><rect x="37.6" y="10" width="5" height="5" fill="#e9e9ed"/><rect x="42.3" y="10" width="5" height="5" fill="#d3d1cf"/><rect x="47.0" y="10" width="5" height="5" fill="#dfdfe3"/><rect x="51.7" y="10" width="5" height="5" fill="#e1e7ef"/><rect x="56.4" y="10" width="5" height="5" fill="#e3e7ed"/><rect x="61.1" y="10" width="5" height="5" fill="#efeff3"/><rect x="65.8" y="10" width="5" height="5" fill="#d3d3d7"/><rect x="70.5" y="10" width="5" height="5" fill="#cbd1d9"/><rect x="75.2" y="10" width="5" height="5" fill="#c7cdd5"/><rect x="79.9" y="10" width="5" height="5" fill="#c6ccd4"/><rect x="84.6" y="10" width="5" height="5" fill="#e3e1df"/><rect x="89.3" y="10" width="5" height="5" fill="#c7cbd1"/><rect x="94.0" y="10" width="5" height="5" fill="#dee0e4"/><rect x="98.7" y="10" width="5" height="5" fill="#d4d2d0"/><rect x="103.4" y="10" width="5" height="5" fill="#f5f7fb"/><rect x="108.1" y="10" width="5" height="5" fill="#f4f8fe"/></pattern><pattern id="p3" patternUnits="userSpaceOnUse" width="112.8" height="15"><rect x="0.0" y="0" width="5" height="5" fill="#f4f2f0"/><rect x="4.7" y="0" width="5" height="5" fill="#d0cecc"/><rect x="9.4" y="0" width="5" height="5" fill="#c7cdd5"/><rect x="14.1" y="0" width="5" height="5" fill="#d1d3d7"/><rect x="18.8" y="0" width="5" height="5" fill="#d8dee6"/><rect x="23.5" y="0" width="5" height="5" fill="#cdd1d7"/><rect x="28.2" y="0" width="5" height="5" fill="#c9cfd7"/><rect x="32.9" y="0" width="5" height="5" fill="#dfe5ed"/><rect x="37.6" y="0" width="5" height="5" fill="#d4dae2"/><rect x="42.3" y="0" width="5" height="5" fill="#d3d1cf"/><rect x="47.0" y="0" width="5" height="5" fill="#d7d9dd"/><rect x="51.7" y="0" width="5" height="5" fill="#f5f3f1"/><rect x="56.4" y="0" width="5" height="5" fill="#c8c6c4"/><rect x="61.1" y="0" width="5" height="5" fill="#e2e8f0"/><rect x="65.8" y="0" width="5" height="5" fill="#dfe1e5"/><rect x="70.5" y="0" width="5" height="5" fill="#dfdddb"/><rect x="75.2" y="0" width="5" height="5" fill="#e4e4e8"/><rect x="79.9" y="0" width="5" height="5" fill="#d5d5d9"/><rect x="84.6" y="0" width="5" height="5" fill="#c7c9cd"/><rect x="89.3" y="0" width="5" height="5" fill="#f5f9ff"/><rect x="94.0" y="0" width="5" height="5" fill="#c9cbcf"/><rect x="98.7" y="0" width="5" height="5" fill="#d7d5d3"/><rect x="103.4" y="0" width="5" height="5" fill="#c5c9cf"/><rect x="108.1" y="0" width="5" height="5" fill="#d4d8de"/><rect x="0.0" y="5" width="5" height="5" fill="#dfe5ed"/><rect x="4.7" y="5" width="5" height="5" fill="#dedcda"/><rect x="9.4" y="5" width="5" height="5" fill="#c8ccd2"/><rect x="14.1" y="5" width="5" height="5" fill="#d1d1d5"/><rect x="18.8" y="5" width="5" height="5" fill="#cfd5dd"/><rect x="23.5" y="5" width="5" height="5" fill="#dfdddb"/><rect x="28.2" y="5" width="5" height="5" fill="#b8b6b4"/><rect x="32.9" y="5" width="5" height="5" fill="#b2b6bc"/><rect x="37.6" y="5" width="5" height="5" fill="#caccd0"/><rect x="42.3" y="5" width="5" height="5" fill="#c0c2c6"/><rect x="47.0" y="5" width="5" height="5" fill="#d7d9dd"/><rect x="51.7" y="5" width="5" height="5" fill="#e6e4e2"/><rect x="56.4" y="5" width="5" height="5" fill="#b4b4b8"/><rect x="61.1" y="5" width="5" height="5" fill="#bdbfc3"/><rect x="65.8" y="5" width="5" height="5" fill="#bfc1c5"/><rect x="70.5" y="5" width="5" height="5" fill="#ccced2"/><rect x="75.2" y="5" width="5" height="5" fill="#c4c4c8"/><rect x="79.9" y="5" width="5" height="5" fill="#cdcbc9"/><rect x="84.6" y="5" width="5" height="5" fill="#d6dae0"/><rect x="89.3" y="5" width="5" height="5" fill="#b1b1b5"/><rect x="94.0" y="5" width="5" height="5" fill="#dce0e6"/><rect x="98.7" y="5" width="5" height="5" fill="#b6bac0"/><rect x="103.4" y="5" width="5" height="5" fill="#bfc1c5"/><rect x="108.1" y="5" width="5" height="5" fill="#babec4"/><rect x="0.0" y="10" width="5" height="5" fill="#dad8d6"/><rect x="4.7" y="10" width="5" height="5" fill="#e4e8ee"/><rect x="9.4" y="10" width="5" height="5" fill="#d1d7df"/><rect x="14.1" y="10" width="5" height="5" fill="#e3e7ed"/><rect x="18.8" y="10" width="5" height="5" fill="#d8d6d4"/><rect x="23.5" y="10" width="5" height="5" fill="#c8c6c4"/><rect x="28.2" y="10" width="5" height="5" fill="#c5c7cb"/><rect x="32.9" y="10" width="5" height="5" fill="#c4c4c8"/><rect x="37.6" y="10" width="5" height="5" fill="#e6eaf0"/><rect x="42.3" y="10" width="5" height="5" fill="#dfe5ed"/><rect x="47.0" y="10" width="5" height="5" fill="#ced4dc"/><rect x="51.7" y="10" width="5" height="5" fill="#c5cbd3"/><rect x="56.4" y="10" width="5" height="5" fill="#e9eff7"/><rect x="61.1" y="10" width="5" height="5" fill="#e1e7ef"/><rect x="65.8" y="10" width="5" height="5" fill="#e7e5e3"/><rect x="70.5" y="10" width="5" height="5" fill="#eff3f9"/><rect x="75.2" y="10" width="5" height="5" fill="#d5d3d1"/><rect x="79.9" y="10" width="5" height="5" fill="#cfd3d9"/><rect x="84.6" y="10" width="5" height="5" fill="#e0dedc"/><rect x="89.3" y="10" width="5" height="5" fill="#c6cad0"/><rect x="94.0" y="10" width="5" height="5" fill="#c3c5c9"/><rect x="98.7" y="10" width="5" height="5" fill="#efedeb"/><rect x="103.4" y="10" width="5" height="5" fill="#dee2e8"/><rect x="108.1" y="10" width="5" height="5" fill="#c6c8cc"/></pattern><pattern id="p4" patternUnits="userSpaceOnUse" width="112.8" height="15"><rect x="0.0" y="0" width="5" height="5" fill="#e9eff7"/><rect x="4.7" y="0" width="5" height="5" fill="#e7e5e3"/><rect x="9.4" y="0" width="5" height="5" fill="#e9edf3"/><rect x="14.1" y="0" width="5" height="5" fill="#f3f1ef"/><rect x="18.8" y="0" width="5" height="5" fill="#c1c7cf"/><rect x="23.5" y="0" width="5" height="5" fill="#ced2d8"/><rect x="28.2" y="0" width="5" height="5" fill="#d0d6de"/><rect x="32.9" y="0" width="5" height="5" fill="#c7c5c3"/><rect x="37.6" y="0" width="5" height="5" fill="#dedcda"/><rect x="42.3" y="0" width="5" height="5" fill="#eae8e6"/><rect x="47.0" y="0" width="5" height="5" fill="#d2d4d8"/><rect x="51.7" y="0" width="5" height="5" fill="#d6dae0"/><rect x="56.4" y="0" width="5" height="5" fill="#d9dde3"/><rect x="61.1" y="0" width="5" height="5" fill="#c7c5c3"/><rect x="65.8" y="0" width="5" height="5" fill="#dbdde1"/><rect x="70.5" y="0" width="5" height="5" fill="#e5e3e1"/><rect x="75.2" y="0" width="5" height="5" fill="#e3e7ed"/><rect x="79.9" y="0" width="5" height="5" fill="#d2d2d6"/><rect x="84.6" y="0" width="5" height="5" fill="#f4f6fa"/><rect x="89.3" y="0" width="5" height="5" fill="#cccac8"/><rect x="94.0" y="0" width="5" height="5" fill="#c8ccd2"/><rect x="98.7" y="0" width="5" height="5" fill="#dcdce0"/><rect x="103.4" y="0" width="5" height="5" fill="#c1c7cf"/><rect x="108.1" y="0" width="5" height="5" fill="#c8c6c4"/><rect x="0.0" y="5" width="5" height="5" fill="#c2c6cc"/><rect x="4.7" y="5" width="5" height="5" fill="#b4b4b8"/><rect x="9.4" y="5" width="5" height="5" fill="#d0d4da"/><rect x="14.1" y="5" width="5" height="5" fill="#d9d9dd"/><rect x="18.8" y="5" width="5" height="5" fill="#cbc9c7"/><rect x="23.5" y="5" width="5" height="5" fill="#d9dfe7"/><rect x="28.2" y="5" width="5" height="5" fill="#bcbab8"/><rect x="32.9" y="5" width="5" height="5" fill="#dddde1"/><rect x="37.6" y="5" width="5" height="5" fill="#d8dce2"/><rect x="42.3" y="5" width="5" height="5" fill="#b1b1b5"/><rect x="47.0" y="5" width="5" height="5" fill="#d3d9e1"/><rect x="51.7" y="5" width="5" height="5" fill="#dddde1"/><rect x="56.4" y="5" width="5" height="5" fill="#b7b7bb"/><rect x="61.1" y="5" width="5" height="5" fill="#dfdfe3"/><rect x="65.8" y="5" width="5" height="5" fill="#d3d5d9"/><rect x="70.5" y="5" width="5" height="5" fill="#e3e3e7"/><rect x="75.2" y="5" width="5" height="5" fill="#e2e6ec"/><rect x="79.9" y="5" width="5" height="5" fill="#b4b6ba"/><rect x="84.6" y="5" width="5" height="5" fill="#b1b5bb"/><rect x="89.3" y="5" width="5" height="5" fill="#dbd9d7"/><rect x="94.0" y="5" width="5" height="5" fill="#b1b7bf"/><rect x="98.7" y="5" width="5" height="5" fill="#e0e6ee"/><rect x="103.4" y="5" width="5" height="5" fill="#d2d4d8"/><rect x="108.1" y="5" width="5" height="5" fill="#d7d9dd"/><rect x="0.0" y="10" width="5" height="5" fill="#ebebef"/><rect x="4.7" y="10" width="5" height="5" fill="#eef2f8"/><rect x="9.4" y="10" width="5" height="5" fill="#e6e4e2"/><rect x="14.1" y="10" width="5" height="5" fill="#bfc5cd"/><rect x="18.8" y="10" width="5" height="5" fill="#c7c7cb"/><rect x="23.5" y="10" width="5" height="5" fill="#e5e7eb"/><rect x="28.2" y="10" width="5" height="5" fill="#ededf1"/><rect x="32.9" y="10" width="5" height="5" fill="#c3c9d1"/><rect x="37.6" y="10" width="5" height="5" fill="#d3d5d9"/><rect x="42.3" y="10" width="5" height="5" fill="#d3d7dd"/><rect x="47.0" y="10" width="5" height="5" fill="#f1f5fb"/><rect x="51.7" y="10" width="5" height="5" fill="#cdd3db"/><rect x="56.4" y="10" width="5" height="5" fill="#dee4ec"/><rect x="61.1" y="10" width="5" height="5" fill="#c3c9d1"/><rect x="65.8" y="10" width="5" height="5" fill="#f2f0ee"/><rect x="70.5" y="10" width="5" height="5" fill="#f4f6fa"/><rect x="75.2" y="10" width="5" height="5" fill="#eaeef4"/><rect x="79.9" y="10" width="5" height="5" fill="#c7c7cb"/><rect x="84.6" y="10" width="5" height="5" fill="#d0cecc"/><rect x="89.3" y="10" width="5" height="5" fill="#d7d5d3"/><rect x="94.0" y="10" width="5" height="5" fill="#eaeaee"/><rect x="98.7" y="10" width="5" height="5" fill="#cbcdd1"/><rect x="103.4" y="10" width="5" height="5" fill="#e1e3e7"/><rect x="108.1" y="10" width="5" height="5" fill="#e6e4e2"/></pattern><pattern id="p5" patternUnits="userSpaceOnUse" width="112.8" height="15"><rect x="0.0" y="0" width="5" height="5" fill="#eef0f4"/><rect x="4.7" y="0" width="5" height="5" fill="#eff3f9"/><rect x="9.4" y="0" width="5" height="5" fill="#eaf0f8"/><rect x="14.1" y="0" width="5" height="5" fill="#d5d5d9"/><rect x="18.8" y="0" width="5" height="5" fill="#d1d7df"/><rect x="23.5" y="0" width="5" height="5" fill="#dce2ea"/><rect x="28.2" y="0" width="5" height="5" fill="#f4f6fa"/><rect x="32.9" y="0" width="5" height="5" fill="#e6eaf0"/><rect x="37.6" y="0" width="5" height="5" fill="#d6d8dc"/><rect x="42.3" y="0" width="5" height="5" fill="#e1e3e7"/><rect x="47.0" y="0" width="5" height="5" fill="#d1d7df"/><rect x="51.7" y="0" width="5" height="5" fill="#c7c7cb"/><rect x="56.4" y="0" width="5" height="5" fill="#e3e1df"/><rect x="61.1" y="0" width="5" height="5" fill="#dbdfe5"/><rect x="65.8" y="0" width="5" height="5" fill="#d0d2d6"/><rect x="70.5" y="0" width="5" height="5" fill="#e8eaee"/><rect x="75.2" y="0" width="5" height="5" fill="#ccccd0"/><rect x="79.9" y="0" width="5" height="5" fill="#d7d5d3"/><rect x="84.6" y="0" width="5" height="5" fill="#cbcbcf"/><rect x="89.3" y="0" width="5" height="5" fill="#ebebef"/><rect x="94.0" y="0" width="5" height="5" fill="#d4d6da"/><rect x="98.7" y="0" width="5" height="5" fill="#f4f2f0"/><rect x="103.4" y="0" width="5" height="5" fill="#cdd3db"/><rect x="108.1" y="0" width="5" height="5" fill="#dee4ec"/><rect x="0.0" y="5" width="5" height="5" fill="#b0b4ba"/><rect x="4.7" y="5" width="5" height="5" fill="#abb1b9"/><rect x="9.4" y="5" width="5" height="5" fill="#d6dce4"/><rect x="14.1" y="5" width="5" height="5" fill="#cccac8"/><rect x="18.8" y="5" width="5" height="5" fill="#dde1e7"/><rect x="23.5" y="5" width="5" height="5" fill="#cdcbc9"/><rect x="28.2" y="5" width="5" height="5" fill="#cbc9c7"/><rect x="32.9" y="5" width="5" height="5" fill="#bab8b6"/><rect x="37.6" y="5" width="5" height="5" fill="#b3b1af"/><rect x="42.3" y="5" width="5" height="5" fill="#e3e1df"/><rect x="47.0" y="5" width="5" height="5" fill="#e0e6ee"/><rect x="51.7" y="5" width="5" height="5" fill="#b6bac0"/><rect x="56.4" y="5" width="5" height="5" fill="#dcdee2"/><rect x="61.1" y="5" width="5" height="5" fill="#e2e0de"/><rect x="65.8" y="5" width="5" height="5" fill="#c3c1bf"/><rect x="70.5" y="5" width="5" height="5" fill="#afb5bd"/><rect x="75.2" y="5" width="5" height="5" fill="#c7c7cb"/><rect x="79.9" y="5" width="5" height="5" fill="#b7b5b3"/><rect x="84.6" y="5" width="5" height="5" fill="#ceccca"/><rect x="89.3" y="5" width="5" height="5" fill="#b6b4b2"/><rect x="94.0" y="5" width="5" height="5" fill="#b5b7bb"/><rect x="98.7" y="5" width="5" height="5" fill="#e8e6e4"/><rect x="103.4" y="5" width="5" height="5" fill="#d7dbe1"/><rect x="108.1" y="5" width="5" height="5" fill="#c2c0be"/><rect x="0.0" y="10" width="5" height="5" fill="#dedee2"/><rect x="4.7" y="10" width="5" height="5" fill="#d7dbe1"/><rect x="9.4" y="10" width="5" height="5" fill="#f8f6f4"/><rect x="14.1" y="10" width="5" height="5" fill="#f1f7ff"/><rect x="18.8" y="10" width="5" height="5" fill="#c0c6ce"/><rect x="23.5" y="10" width="5" height="5" fill="#e6e6ea"/><rect x="28.2" y="10" width="5" height="5" fill="#d0d2d6"/><rect x="32.9" y="10" width="5" height="5" fill="#c2c8d0"/><rect x="37.6" y="10" width="5" height="5" fill="#dfdfe3"/><rect x="42.3" y="10" width="5" height="5" fill="#f3f7fd"/><rect x="47.0" y="10" width="5" height="5" fill="#f0eeec"/><rect x="51.7" y="10" width="5" height="5" fill="#e2e4e8"/><rect x="56.4" y="10" width="5" height="5" fill="#e6eaf0"/><rect x="61.1" y="10" width="5" height="5" fill="#c9cfd7"/><rect x="65.8" y="10" width="5" height="5" fill="#e1dfdd"/><rect x="70.5" y="10" width="5" height="5" fill="#d9d7d5"/><rect x="75.2" y="10" width="5" height="5" fill="#d7d5d3"/><rect x="79.9" y="10" width="5" height="5" fill="#dce0e6"/><rect x="84.6" y="10" width="5" height="5" fill="#d2d8e0"/><rect x="89.3" y="10" width="5" height="5" fill="#e2e8f0"/><rect x="94.0" y="10" width="5" height="5" fill="#caced4"/><rect x="98.7" y="10" width="5" height="5" fill="#ecf0f6"/><rect x="103.4" y="10" width="5" height="5" fill="#c7cbd1"/><rect x="108.1" y="10" width="5" height="5" fill="#dfe5ed"/></pattern></defs><g transform="translate(275,83.0)"><rect width="116.0" height="14" fill="url(#p0)"/></g><g transform="translate(101,497.0)"><rect width="35.0" height="14" fill="url(#p1)"/></g><g transform="translate(226,496.0)"><rect width="110.0" height="14" fill="url(#p2)"/></g><g transform="translate(365,496.0)"><rect width="147.0" height="14" fill="url(#p3)"/></g><g transform="translate(561,496.0)"><rect width="267.0" height="14" fill="url(#p4)"/></g><g transform="translate(864,496.0)"><rect width="55.0" height="14" fill="url(#p5)"/></g><g transform="translate(101,530.0)"><rect width="35.0" height="14" fill="url(#p0)"/></g><g transform="translate(226,529.0)"><rect width="110.0" height="14" fill="url(#p1)"/></g><g transform="translate(365,529.0)"><rect width="155.0" height="14" fill="url(#p2)"/></g><g transform="translate(561,529.0)"><rect width="261.0" height="14" fill="url(#p3)"/></g><g transform="translate(864,529.0)"><rect width="56.0" height="14" fill="url(#p4)"/></g><g transform="translate(101,563.0)"><rect width="35.0" height="14" fill="url(#p5)"/></g><g transform="translate(226,562.0)"><rect width="110.0" height="14" fill="url(#p0)"/></g><g transform="translate(365,562.0)"><rect width="141.0" height="14" fill="url(#p1)"/></g><g transform="translate(561,562.0)"><rect width="261.0" height="14" fill="url(#p2)"/></g><g transform="translate(864,562.0)"><rect width="56.0" height="14" fill="url(#p3)"/></g><g transform="translate(101,596.0)"><rect width="35.0" height="14" fill="url(#p4)"/></g><g transform="translate(226,595.0)"><rect width="110.0" height="14" fill="url(#p5)"/></g><g transform="translate(365,595.0)"><rect width="155.0" height="14" fill="url(#p0)"/></g><g transform="translate(561,595.0)"><rect width="265.0" height="14" fill="url(#p1)"/></g><g transform="translate(101,629.0)"><rect width="35.0" height="14" fill="url(#p2)"/></g><g transform="translate(226,628.0)"><rect width="110.0" height="14" fill="url(#p3)"/></g><g transform="translate(365,628.0)"><rect width="155.0" height="14" fill="url(#p4)"/></g><g transform="translate(561,628.0)"><rect width="259.0" height="14" fill="url(#p5)"/></g><g transform="translate(862,628.0)"><rect width="55.0" height="14" fill="url(#p0)"/></g><g transform="translate(101,662.0)"><rect width="35.0" height="14" fill="url(#p1)"/></g><g transform="translate(226,661.0)"><rect width="110.0" height="14" fill="url(#p2)"/></g><g transform="translate(365,661.0)"><rect width="140.0" height="14" fill="url(#p3)"/></g><g transform="translate(561,661.0)"><rect width="269.0" height="14" fill="url(#p4)"/></g><g transform="translate(862,661.0)"><rect width="55.0" height="14" fill="url(#p5)"/></g><g transform="translate(101,695.0)"><rect width="35.0" height="14" fill="url(#p0)"/></g><g transform="translate(226,694.0)"><rect width="110.0" height="14" fill="url(#p1)"/></g><g transform="translate(365,694.0)"><rect width="149.0" height="14" fill="url(#p2)"/></g><g transform="translate(561,694.0)"><rect width="271.0" height="14" fill="url(#p3)"/></g><g transform="translate(862,694.0)"><rect width="56.0" height="14" fill="url(#p4)"/></g><g transform="translate(101,728.0)"><rect width="35.0" height="14" fill="url(#p5)"/></g><g transform="translate(226,727.0)"><rect width="110.0" height="14" fill="url(#p0)"/></g><g transform="translate(365,727.0)"><rect width="165.0" height="14" fill="url(#p1)"/></g><g transform="translate(561,727.0)"><rect width="257.0" height="14" fill="url(#p2)"/></g><g transform="translate(862,727.0)"><rect width="56.0" height="14" fill="url(#p3)"/></g><g transform="translate(101,761.0)"><rect width="35.0" height="14" fill="url(#p4)"/></g><g transform="translate(226,760.0)"><rect width="110.0" height="14" fill="url(#p5)"/></g><g transform="translate(365,760.0)"><rect width="150.0" height="14" fill="url(#p0)"/></g><g transform="translate(561,760.0)"><rect width="257.0" height="14" fill="url(#p1)"/></g><g transform="translate(862,760.0)"><rect width="70.0" height="14" fill="url(#p2)"/></g><g transform="translate(101,794.0)"><rect width="35.0" height="14" fill="url(#p3)"/></g><g transform="translate(226,793.0)"><rect width="110.0" height="14" fill="url(#p4)"/></g><g transform="translate(365,793.0)"><rect width="158.0" height="14" fill="url(#p5)"/></g><g transform="translate(561,793.0)"><rect width="257.0" height="14" fill="url(#p0)"/></g><g transform="translate(862,793.0)"><rect width="56.0" height="14" fill="url(#p1)"/></g><g transform="translate(101,827.0)"><rect width="35.0" height="14" fill="url(#p2)"/></g><g transform="translate(226,826.0)"><rect width="110.0" height="14" fill="url(#p3)"/></g><g transform="translate(365,826.0)"><rect width="155.0" height="14" fill="url(#p4)"/></g><g transform="translate(561,826.0)"><rect width="261.0" height="14" fill="url(#p5)"/></g><g transform="translate(862,826.0)"><rect width="56.0" height="14" fill="url(#p0)"/></g><rect x="345.5" y="82" width="4.5" height="16" fill="#fff"/><rect x="376" y="82" width="16" height="16" fill="#fff" fill-opacity="0.6"/><rect x="291.2" y="495" width="4.8" height="16" fill="#fff"/><rect x="291.2" y="528" width="4.8" height="16" fill="#fff"/><rect x="291.2" y="561" width="4.8" height="16" fill="#fff"/><rect x="291.2" y="594" width="4.8" height="16" fill="#fff"/><rect x="291.2" y="627" width="4.8" height="16" fill="#fff"/><rect x="291.2" y="660" width="4.8" height="16" fill="#fff"/><rect x="291.2" y="693" width="4.8" height="16" fill="#fff"/><rect x="291.2" y="726" width="4.8" height="16" fill="#fff"/><rect x="291.2" y="759" width="4.8" height="16" fill="#fff"/><rect x="291.2" y="792" width="4.8" height="16" fill="#fff"/><rect x="291.2" y="825" width="4.8" height="16" fill="#fff"/></svg>
<div style="position:absolute;left:32px;top:844px;width:1400px;height:8px;background:#6ec49f;border-bottom-left-radius:7px;"></div>
<div class="t s14" style="left:1365.00px;top:872.15px;font-size:14px;line-height:14px;color:#222;font-weight:400;">Rows per page:</div>
<div style="position:absolute;left:851px;top:585px;width:420px;height:34px;box-sizing:border-box;border:2px solid #ff0000;border-left-color:#b5101a;border-right-color:#b5101a;box-shadow:2px 3px 3px rgba(0,0,0,0.28), inset 2px 3px 3px rgba(0,0,0,0.22);"></div>
</body></html>
